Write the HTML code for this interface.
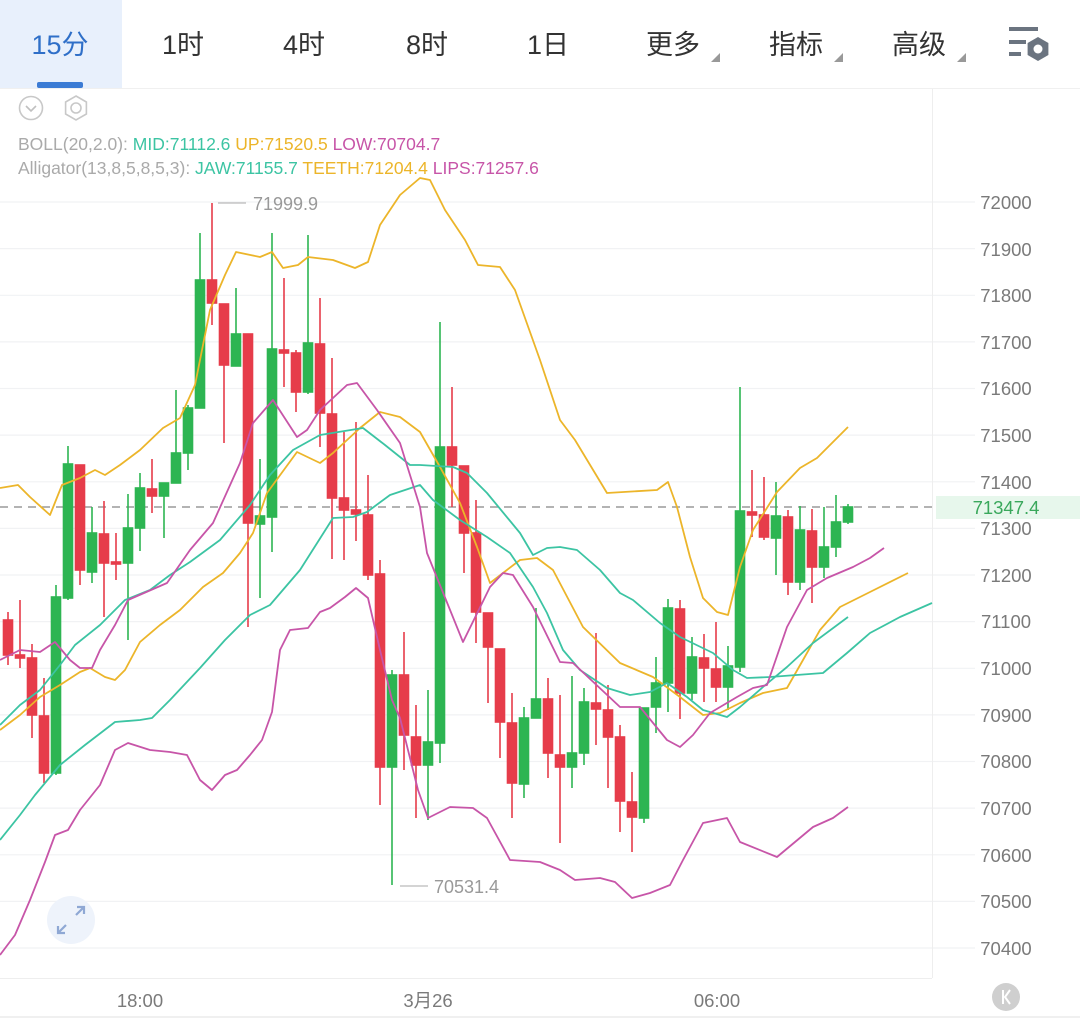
<!DOCTYPE html>
<html><head><meta charset="utf-8"><style>
html,body{margin:0;padding:0;background:#fff;}
body{width:1080px;height:1019px;overflow:hidden;position:relative;font-family:"Liberation Sans","Noto Sans CJK SC",sans-serif;}
svg{position:absolute;left:0;top:0;}
</style></head><body>
<svg width="1080" height="1019" viewBox="0 0 1080 1019" xmlns="http://www.w3.org/2000/svg" font-family="Liberation Sans, Noto Sans CJK SC, sans-serif">
<rect x="0" y="0" width="1080" height="1019" fill="#fff"/>
<rect x="0" y="0" width="122" height="88" fill="#e8f0fc"/>
<rect x="37" y="82" width="46" height="6" rx="2" fill="#3b7bd4"/>
<line x1="0" y1="88.5" x2="1080" y2="88.5" stroke="#f0f0f0"/>
<g font-size="27" fill="#333" text-anchor="middle">
<text x="60" y="54" fill="#2f6fc8">15分</text>
<text x="183" y="54">1时</text>
<text x="304" y="54">4时</text>
<text x="427" y="54">8时</text>
<text x="548" y="54">1日</text>
<text x="673" y="54">更多</text>
<text x="796" y="54">指标</text>
<text x="919" y="54">高级</text>
</g>
<g fill="#999">
<path d="M711 62 L720 53 L720 62Z"/><path d="M834 62 L843 53 L843 62Z"/><path d="M957 62 L966 53 L966 62Z"/>
</g>
<g fill="#6b7480">
<rect x="1009" y="27" width="29" height="4"/><rect x="1009" y="40" width="17" height="4"/><rect x="1009" y="52" width="12" height="4"/>
<path d="M1038 37 L1048.4 43 L1048.4 55 L1038 61 L1027.6 55 L1027.6 43Z"/>
</g>
<circle cx="1038" cy="49" r="4.5" fill="#fff"/>
<circle cx="31" cy="108" r="11.5" fill="none" stroke="#c8c8c8" stroke-width="1.6"/>
<path d="M26 106 L31 111 L36 106" fill="none" stroke="#c0c0c0" stroke-width="1.6"/>
<path d="M76 96 L86.4 102 L86.4 114 L76 120 L65.6 114 L65.6 102Z" fill="none" stroke="#c8c8c8" stroke-width="1.6"/>
<circle cx="76" cy="108" r="5" fill="none" stroke="#c8c8c8" stroke-width="1.6"/>
<text x="18" y="150" font-size="17.5"><tspan fill="#aaa">BOLL(20,2.0): </tspan><tspan fill="#3cc4a3">MID:71112.6 </tspan><tspan fill="#ecb52a">UP:71520.5 </tspan><tspan fill="#c755a8">LOW:70704.7</tspan></text>
<text x="18" y="174" font-size="17.5"><tspan fill="#aaa">Alligator(13,8,5,8,5,3): </tspan><tspan fill="#3cc4a3">JAW:71155.7 </tspan><tspan fill="#ecb52a">TEETH:71204.4 </tspan><tspan fill="#c755a8">LIPS:71257.6</tspan></text>
<g stroke="#f1f2f4" stroke-width="1.2">
<line x1="0" y1="202" x2="975" y2="202"/><line x1="0" y1="248.6" x2="975" y2="248.6"/><line x1="0" y1="295.3" x2="975" y2="295.3"/><line x1="0" y1="341.9" x2="975" y2="341.9"/><line x1="0" y1="388.5" x2="975" y2="388.5"/><line x1="0" y1="435.1" x2="975" y2="435.1"/><line x1="0" y1="481.8" x2="975" y2="481.8"/><line x1="0" y1="528.4" x2="975" y2="528.4"/><line x1="0" y1="575" x2="975" y2="575"/><line x1="0" y1="621.6" x2="975" y2="621.6"/><line x1="0" y1="668.3" x2="975" y2="668.3"/><line x1="0" y1="714.9" x2="975" y2="714.9"/><line x1="0" y1="761.5" x2="975" y2="761.5"/><line x1="0" y1="808.1" x2="975" y2="808.1"/><line x1="0" y1="854.8" x2="975" y2="854.8"/><line x1="0" y1="901.4" x2="975" y2="901.4"/><line x1="0" y1="948" x2="975" y2="948"/>
</g>
<line x1="932.5" y1="89" x2="932.5" y2="978" stroke="#eeeeee"/>
<line x1="0" y1="978.5" x2="932" y2="978.5" stroke="#eeeeee"/>
<line x1="0" y1="1017" x2="1080" y2="1017" stroke="#f0f0f0" stroke-width="2"/>
<g font-size="18.5" fill="#7a7a7a" text-anchor="middle">
<text x="1006" y="209">72000</text><text x="1006" y="256">71900</text><text x="1006" y="302">71800</text><text x="1006" y="349">71700</text><text x="1006" y="395">71600</text><text x="1006" y="442">71500</text><text x="1006" y="489">71400</text><text x="1006" y="535">71300</text><text x="1006" y="582">71200</text><text x="1006" y="628">71100</text><text x="1006" y="675">71000</text><text x="1006" y="722">70900</text><text x="1006" y="768">70800</text><text x="1006" y="815">70700</text><text x="1006" y="862">70600</text><text x="1006" y="908">70500</text><text x="1006" y="955">70400</text>
</g>
<rect x="936" y="496" width="144" height="23" fill="#e7f7ec"/>
<text x="1006" y="514" font-size="18.5" fill="#3aa85c" text-anchor="middle">71347.4</text>
<line x1="0" y1="507" x2="932" y2="507" stroke="#9a9a9a" stroke-width="1.5" stroke-dasharray="8,6"/>
<g font-size="18.5" fill="#7a7a7a" text-anchor="middle">
<text x="140" y="1007">18:00</text><text x="428" y="1007">3月26</text><text x="717" y="1007">06:00</text>
</g>
<circle cx="1006" cy="997" r="14" fill="#cfcfcf"/>
<path d="M1003 990 L1003 1004 M1010 990 L1005 997 L1010 1004" stroke="#fff" stroke-width="2" fill="none"/>
<circle cx="71" cy="920" r="24" fill="#eef3fb"/>
<path d="M66 925 L58 933 M58 926 L58 933 L65 933 M76 915 L84 907 M77 907 L84 907 L84 914" stroke="#8fa8d4" stroke-width="2.2" fill="none"/>
<g stroke-width="1.6">
<g stroke="#e63c4a" fill="#e63c4a">
<line x1="8" y1="612" x2="8" y2="665"/><rect x="3.5" y="620" width="9" height="35"/>
<line x1="20" y1="600" x2="20" y2="668"/><rect x="15.5" y="655" width="9" height="3"/>
<line x1="32" y1="644" x2="32" y2="738"/><rect x="27.5" y="658" width="9" height="57"/>
<line x1="44" y1="678" x2="44" y2="783"/><rect x="39.5" y="716" width="9" height="57"/>
<line x1="80" y1="465" x2="80" y2="585"/><rect x="75.5" y="465" width="9" height="105"/>
<line x1="104" y1="501" x2="104" y2="617"/><rect x="99.5" y="534" width="9" height="29"/>
<line x1="116" y1="533" x2="116" y2="580"/><rect x="111.5" y="562" width="9" height="2"/>
<line x1="152" y1="459" x2="152" y2="513"/><rect x="147.5" y="489" width="9" height="7"/>
<line x1="212" y1="203" x2="212" y2="325"/><rect x="207.5" y="280" width="9" height="23"/>
<line x1="224" y1="304" x2="224" y2="443"/><rect x="219.5" y="304" width="9" height="61"/>
<line x1="248" y1="334" x2="248" y2="627"/><rect x="243.5" y="334" width="9" height="189"/>
<line x1="284" y1="278" x2="284" y2="387"/><rect x="279.5" y="350" width="9" height="3"/>
<line x1="296" y1="350" x2="296" y2="412"/><rect x="291.5" y="353" width="9" height="39"/>
<line x1="320" y1="298" x2="320" y2="447"/><rect x="315.5" y="344" width="9" height="69"/>
<line x1="332" y1="358" x2="332" y2="559"/><rect x="327.5" y="414" width="9" height="84"/>
<line x1="344" y1="432" x2="344" y2="560"/><rect x="339.5" y="498" width="9" height="12"/>
<line x1="356" y1="422" x2="356" y2="541"/><rect x="351.5" y="510" width="9" height="4"/>
<line x1="368" y1="475" x2="368" y2="580"/><rect x="363.5" y="515" width="9" height="60"/>
<line x1="380" y1="560" x2="380" y2="805"/><rect x="375.5" y="574" width="9" height="193"/>
<line x1="404" y1="632" x2="404" y2="770"/><rect x="399.5" y="675" width="9" height="60"/>
<line x1="416" y1="705" x2="416" y2="818"/><rect x="411.5" y="737" width="9" height="28"/>
<line x1="452" y1="387" x2="452" y2="507"/><rect x="447.5" y="447" width="9" height="18"/>
<line x1="464" y1="466" x2="464" y2="573"/><rect x="459.5" y="466" width="9" height="67"/>
<line x1="476" y1="500" x2="476" y2="643"/><rect x="471.5" y="533" width="9" height="79"/>
<line x1="488" y1="613" x2="488" y2="703"/><rect x="483.5" y="613" width="9" height="34"/>
<line x1="500" y1="649" x2="500" y2="758"/><rect x="495.5" y="649" width="9" height="73"/>
<line x1="512" y1="693" x2="512" y2="818"/><rect x="507.5" y="723" width="9" height="60"/>
<line x1="548" y1="678" x2="548" y2="778"/><rect x="543.5" y="699" width="9" height="54"/>
<line x1="560" y1="695" x2="560" y2="843"/><rect x="555.5" y="755" width="9" height="12"/>
<line x1="596" y1="633" x2="596" y2="745"/><rect x="591.5" y="703" width="9" height="6"/>
<line x1="608" y1="685" x2="608" y2="788"/><rect x="603.5" y="710" width="9" height="27"/>
<line x1="620" y1="725" x2="620" y2="832"/><rect x="615.5" y="737" width="9" height="64"/>
<line x1="632" y1="772" x2="632" y2="852"/><rect x="627.5" y="802" width="9" height="15"/>
<line x1="680" y1="600" x2="680" y2="719"/><rect x="675.5" y="609" width="9" height="84"/>
<line x1="704" y1="634" x2="704" y2="702"/><rect x="699.5" y="658" width="9" height="10"/>
<line x1="716" y1="622" x2="716" y2="702"/><rect x="711.5" y="669" width="9" height="18"/>
<line x1="752" y1="470" x2="752" y2="537"/><rect x="747.5" y="512" width="9" height="3"/>
<line x1="764" y1="477" x2="764" y2="540"/><rect x="759.5" y="515" width="9" height="22"/>
<line x1="788" y1="510" x2="788" y2="595"/><rect x="783.5" y="517" width="9" height="65"/>
<line x1="812" y1="509" x2="812" y2="603"/><rect x="807.5" y="531" width="9" height="36"/>
</g>
<g stroke="#2db552" fill="#2db552">
<line x1="56" y1="585" x2="56" y2="775"/><rect x="51.5" y="597" width="9" height="176"/>
<line x1="68" y1="446" x2="68" y2="600"/><rect x="63.5" y="464" width="9" height="134"/>
<line x1="92" y1="507" x2="92" y2="583"/><rect x="87.5" y="533" width="9" height="39"/>
<line x1="128" y1="494" x2="128" y2="640"/><rect x="123.5" y="528" width="9" height="35"/>
<line x1="140" y1="473" x2="140" y2="551"/><rect x="135.5" y="488" width="9" height="40"/>
<line x1="164" y1="483" x2="164" y2="538"/><rect x="159.5" y="483" width="9" height="13"/>
<line x1="176" y1="390" x2="176" y2="482"/><rect x="171.5" y="453" width="9" height="30"/>
<line x1="188" y1="405" x2="188" y2="470"/><rect x="183.5" y="408" width="9" height="45"/>
<line x1="200" y1="233" x2="200" y2="408"/><rect x="195.5" y="280" width="9" height="128"/>
<line x1="236" y1="288" x2="236" y2="366"/><rect x="231.5" y="334" width="9" height="32"/>
<line x1="260" y1="459" x2="260" y2="598"/><rect x="255.5" y="516" width="9" height="8"/>
<line x1="272" y1="233" x2="272" y2="552"/><rect x="267.5" y="349" width="9" height="168"/>
<line x1="308" y1="235" x2="308" y2="394"/><rect x="303.5" y="343" width="9" height="49"/>
<line x1="392" y1="670" x2="392" y2="885"/><rect x="387.5" y="675" width="9" height="92"/>
<line x1="428" y1="690" x2="428" y2="820"/><rect x="423.5" y="742" width="9" height="23"/>
<line x1="440" y1="322" x2="440" y2="763"/><rect x="435.5" y="447" width="9" height="296"/>
<line x1="524" y1="707" x2="524" y2="798"/><rect x="519.5" y="718" width="9" height="66"/>
<line x1="536" y1="608" x2="536" y2="718"/><rect x="531.5" y="699" width="9" height="19"/>
<line x1="572" y1="676" x2="572" y2="788"/><rect x="567.5" y="753" width="9" height="14"/>
<line x1="584" y1="688" x2="584" y2="765"/><rect x="579.5" y="702" width="9" height="51"/>
<line x1="644" y1="708" x2="644" y2="823"/><rect x="639.5" y="708" width="9" height="110"/>
<line x1="656" y1="657" x2="656" y2="733"/><rect x="651.5" y="683" width="9" height="24"/>
<line x1="668" y1="599" x2="668" y2="712"/><rect x="663.5" y="608" width="9" height="75"/>
<line x1="692" y1="637" x2="692" y2="700"/><rect x="687.5" y="657" width="9" height="36"/>
<line x1="728" y1="646" x2="728" y2="710"/><rect x="723.5" y="666" width="9" height="21"/>
<line x1="740" y1="387" x2="740" y2="672"/><rect x="735.5" y="511" width="9" height="156"/>
<line x1="776" y1="482" x2="776" y2="575"/><rect x="771.5" y="516" width="9" height="22"/>
<line x1="800" y1="506" x2="800" y2="590"/><rect x="795.5" y="530" width="9" height="52"/>
<line x1="824" y1="507" x2="824" y2="578"/><rect x="819.5" y="547" width="9" height="20"/>
<line x1="836" y1="495" x2="836" y2="557"/><rect x="831.5" y="522" width="9" height="25"/>
<line x1="848" y1="504" x2="848" y2="524"/><rect x="843.5" y="507" width="9" height="15"/>
</g>
</g>
<g fill="none" stroke-width="1.8" stroke-linejoin="round">
<polyline stroke="#ecb52a" points="0,488 18,485 30,497 50,515 62,485 80,478 95,470 105,475 120,465 140,450 163,428 180,418 195,385 210,310 225,275 236,252 260,257 272,252 283,268 298,265 308,257 333,260 355,268 368,262 380,225 400,195 420,178 430,180 445,210 465,240 478,265 500,267 515,290 540,360 560,420 575,440 607,493 657,490 668,482 677,507 690,557 703,598 717,612 728,615 740,567 753,530 777,492 800,468 817,458 848,427"/>
<polyline stroke="#ecb52a" points="0,730 20,715 40,697 60,685 80,672 90,668 105,677 115,680 125,670 140,642 160,625 180,610 203,587 223,573 240,553 253,533 267,493 297,452 320,463 333,453 360,428 380,412 400,417 420,432 440,467 460,503 477,547 490,583 503,573 520,560 537,558 553,570 583,627 620,663 653,677 680,697 703,715 720,713 740,703 763,693 787,688 803,660 820,630 840,607 870,592 908,573"/>
<polyline stroke="#3cc4a3" points="0,840 20,815 35,795 60,765 85,745 115,722 140,720 152,718 170,700 200,668 225,640 250,615 270,605 300,570 333,518 353,517 367,512 390,495 420,485 433,500 460,520 487,537 510,553 533,587 547,613 563,650 580,670 607,688 630,695 650,692 667,683 687,697 703,710 727,717 740,707 763,687 787,667 813,643 848,617"/>
<polyline stroke="#3cc4a3" points="0,725 20,705 40,690 60,665 75,645 100,625 125,600 150,590 170,575 190,562 220,540 250,505 270,475 293,450 320,435 363,428 385,445 410,465 420,465 453,467 467,473 487,493 520,533 533,555 547,548 560,547 577,550 600,570 620,593 633,600 660,623 680,637 713,653 733,670 747,678 770,677 823,673 847,653 870,633 900,617 932,603"/>
<polyline stroke="#c755a8" points="0,660 20,650 40,652 55,642 70,660 80,668 92,668 100,650 115,625 128,600 167,583 190,550 213,523 240,463 253,423 273,400 297,437 307,430 320,410 347,385 357,383 377,410 400,443 420,507 427,553 463,642 490,587 503,573 513,575 533,607 560,662 573,663 620,707 640,707 667,740 680,747 693,735 710,713 737,697 753,688 767,685 787,627 807,590 827,578 853,567 870,558 884,548"/>
<polyline stroke="#c755a8" points="0,955 15,935 30,900 45,862 55,835 68,830 80,810 100,785 115,750 128,743 150,750 170,752 187,755 200,780 212,790 225,775 237,770 250,755 262,740 272,712 280,650 290,630 308,628 320,612 330,608 345,597 356,588 368,598 380,650 392,700 400,718 418,790 428,818 450,807 473,808 487,818 510,860 540,862 560,870 575,880 600,878 615,882 632,898 650,893 670,885 683,860 703,823 727,818 740,842 777,857 813,827 833,818 848,807"/>
</g>
<line x1="218" y1="203" x2="246" y2="203" stroke="#aaa"/>
<text x="253" y="210" font-size="18" fill="#999">71999.9</text>
<line x1="400" y1="886" x2="428" y2="886" stroke="#aaa"/>
<text x="434" y="893" font-size="18" fill="#999">70531.4</text>
</svg>
</body></html>
